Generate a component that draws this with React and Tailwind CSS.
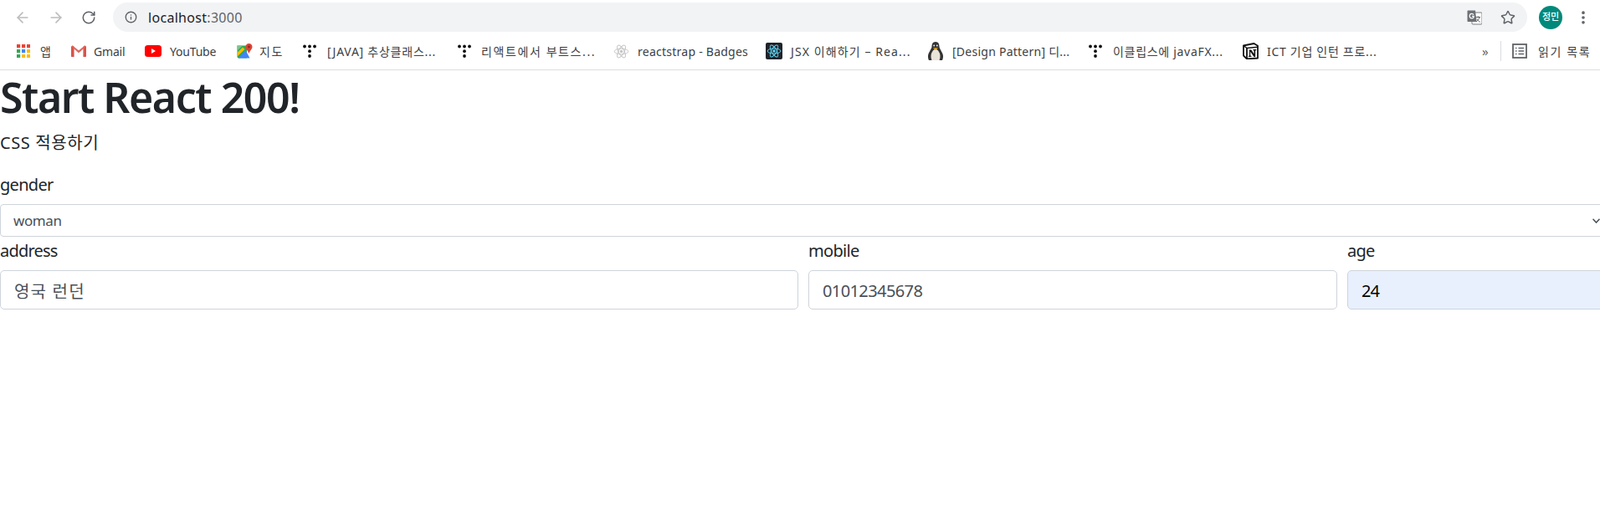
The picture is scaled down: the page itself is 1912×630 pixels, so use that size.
import React from "react";
import { ArrowLeft, ArrowRight, RotateCw, Star, MoreVertical, Info } from "lucide-react";

const ui = "font-['Noto_Sans','Noto_Sans_CJK_KR',sans-serif]";

function Apps() {
  const c = ["#ea4335", "#ea4335", "#ea4335", "#34a853", "#4285f4", "#fbbc05", "#34a853", "#fbbc05", "#fbbc05"];
  return (
    <svg width="16" height="16" viewBox="0 0 16 16">
      {c.map((f, i) => (
        <rect key={i} x={(i % 3) * 6} y={Math.floor(i / 3) * 6} width="4.2" height="4.2" fill={f} />
      ))}
    </svg>
  );
}
function Gmail() {
  return (
    <svg width="18" height="14" viewBox="0 0 18 14">
      <path d="M0.5 1.5V14H3.5V5L9 9.2L14.5 5V14H17.5V1.5L16 0.5L9 6L2 0.5Z" fill="#d9d9d9" />
      <path d="M0 1.8L1.6 0.4L3.5 1.8V14H1C0.4 14 0 13.6 0 13Z" fill="#d9534a" />
      <path d="M18 1.8L16.4 0.4L14.5 1.8V14H17C17.6 14 18 13.6 18 13Z" fill="#d9534a" />
      <path d="M1.6 0.4L9 6.4L16.4 0.4L17.6 1.6L9 9.2L0.6 1.6Z" fill="#e4645a" />
    </svg>
  );
}
function YouTube() {
  return (
    <svg width="20" height="14" viewBox="0 0 20 14">
      <rect width="20" height="14" rx="3.5" fill="#f00" />
      <path d="M8 4L13 7L8 10Z" fill="#fff" />
    </svg>
  );
}
function Maps() {
  return (
    <svg width="19" height="18" viewBox="0 0 19 18">
      <path d="M0.5 2.5L12 2.5V17.5H2L0.5 16.500Z" fill="#34a853" />
      <path d="M1.500 17.500L10.500 8L15.500 17.500Z" fill="#4285f4" />
      <path d="M0.500 11L7 4.500L9.500 7L0.500 15.500Z" fill="#fbbc05" />
      <path d="M0.500 2.500H7L0.500 8.500Z" fill="#7cc48f" />
      <path d="M14.500 0C12 0 10.500 1.900 10.500 3.900C10.500 6.600 13.500 8.600 14.500 12C15.500 8.600 18.500 6.600 18.500 3.900C18.500 1.900 17 0 14.500 0Z" fill="#db4437" />
      <circle cx="14.500" cy="4" r="1.400" fill="#8c2a22" />
    </svg>
  );
}
function Dots() {
  return (
    <svg width="16" height="16" viewBox="0 0 16 16">
      {[[2, 2.5], [8, 2.5], [14, 2.5], [8, 8.2], [8, 14]].map(([x, y], i) => (
        <circle key={i} cx={x} cy={y} r="1.9" fill="#111" />
      ))}
    </svg>
  );
}
function ReactGlyph({ size, color }) {
  return (
    <svg width={size} height={size} viewBox="0 0 24 24" fill="none" stroke={color} strokeWidth="1.2">
      <ellipse cx="12" cy="12" rx="10.5" ry="4.2" />
      <ellipse cx="12" cy="12" rx="10.5" ry="4.2" transform="rotate(60 12 12)" />
      <ellipse cx="12" cy="12" rx="10.5" ry="4.2" transform="rotate(120 12 12)" />
      <circle cx="12" cy="12" r="2.2" fill={color} stroke="none" />
    </svg>
  );
}
function Penguin() {
  return (
    <svg width="20" height="22" viewBox="0 0 20 22">
      <path d="M10 0C6.500 0 5.500 2.800 5.500 5.800C5.500 8 2.200 12 1.200 15.500C0.700 17.500 1 20 2 22H18C19 20 19.300 17.500 18.800 15.500C17.800 12 14.500 8 14.500 5.800C14.500 2.800 13.500 0 10 0Z" fill="#333" />
      <path d="M10 8.500C7.500 9 4.500 13 4.500 17C4.500 19 5 21 5.500 22H14.500C15 21 15.500 19 15.500 17C15.500 13 12.500 9 10 8.500Z" fill="#e9e4d8" />
      <path d="M7 7.200H13L10 10Z" fill="#e8a61c" />
      <circle cx="8.200" cy="4.500" r="1" fill="#eee" />
      <circle cx="11.800" cy="4.500" r="1" fill="#eee" />
    </svg>
  );
}
function Notion() {
  return (
    <svg width="19" height="20" viewBox="0 0 19 20">
      <path d="M1 3.500L13.500 1L18 3.800V18.500L5 19.500L1 15.500Z" fill="#fff" stroke="#111" strokeWidth="1.800" strokeLinejoin="round" />
      <path d="M1 3.500L5 6.500L18 5.300" fill="none" stroke="#111" strokeWidth="1.500" />
      <path d="M5 6.500V19" stroke="#111" strokeWidth="1.800" />
      <path d="M7.500 8.500H10.300L13.500 13.500V9.500L12.500 9V8H16.200V9L15.200 9.500V17H13.500L9.200 10.700V15.500L10.500 16V17H7V16L8 15.500V9.500L7.500 9Z" fill="#111" />
    </svg>
  );
}
function Translate() {
  return (
    <svg width="18" height="18" viewBox="0 0 18 18">
      <rect x="6" y="3" width="12" height="14" rx="1" fill="#fff" stroke="#7a7d80" strokeWidth="1" />
      <path d="M1.500 0.500H10L11.500 14H1.500C0.900 14 0.500 13.600 0.500 13V1.500C0.500 0.900 0.900 0.500 1.500 0.500Z" fill="#6d7074" />
      <path d="M8 5.600C7.500 4.700 6.700 4.300 5.800 4.300C4.300 4.300 3.200 5.500 3.200 7.100C3.200 8.700 4.300 9.900 5.800 9.900C7.300 9.900 8.200 8.900 8.200 7.300H5.900" fill="none" stroke="#fff" strokeWidth="1.200" />
      <path d="M10.500 8.500H16M13.300 7.300V8.500M15 8.500C14.500 11 12.800 13 11 14M11.800 10.500C12.500 12 14 13.500 15.800 14.300" fill="none" stroke="#5f6368" strokeWidth="1" />
    </svg>
  );
}
function ReadingList() {
  return (
    <svg width="18" height="18" viewBox="0 0 18 18" fill="none">
      <rect x="1" y="1" width="16" height="16" stroke="#5f6368" strokeWidth="1.800" />
      <path d="M4 5.500H5.500M7.500 5.500H14M4 9H5.500M7.500 9H14M4 12.500H5.500M7.500 12.500H14" stroke="#5f6368" strokeWidth="1.500" />
    </svg>
  );
}

function Bookmark({ width, icon, gap = "gap-[10px]", align = "justify-center", track = "tracking-[-0.2px]", children }) {
  return (
    <div className={`flex items-center shrink-0 ${gap} ${width}`}>
      <span className={`flex w-[20px] shrink-0 ${align}`}>{icon}</span>
      <span className={`whitespace-nowrap text-[14px] text-[#3c4043] ${track}`}>{children}</span>
    </div>
  );
}

const inputBase =
  "block w-full h-[47px] rounded-[5px] border border-[#ced4da] px-[16px] pt-[2px] text-[20px] outline-none";

export default function App() {
  return (
    <div className={`${ui} w-[1912px] h-[630px] overflow-hidden bg-white`}>
      <header className="h-[84px] border-b border-[#dadce0]">
        <div className="h-[41px] flex items-start pt-[3px]">
          <div className="flex items-center h-[35px] w-[135px] shrink-0 pl-[17px] gap-[20px]">
            <ArrowLeft size={20} strokeWidth={2} className="text-[#babcbe]" />
            <ArrowRight size={20} strokeWidth={2} className="text-[#babcbe]" />
            <RotateCw size={18} strokeWidth={2} className="text-[#5f6368]" />
          </div>
          <div className="flex items-center h-[35px] w-[1690px] rounded-full bg-[#f1f3f4] pl-[14px] pr-[14px]">
            <Info size={15} strokeWidth={2.2} className="text-[#5f6368]" />
            <span className="ml-[13px] text-[16px] tracking-[0.3px] text-[#202124]">
              localhost<span className="text-[#5f6368]">:3000</span>
            </span>
            <div className="ml-auto flex items-center gap-[22px]">
              <Translate />
              <Star size={18} strokeWidth={2} className="text-[#5f6368]" />
            </div>
          </div>
          <div className="flex items-center h-[35px] ml-[14px] gap-[19px]">
            <div className="flex h-[28px] w-[28px] items-center justify-center rounded-full bg-[#00897b] text-[11px] font-medium text-white">
              정민
            </div>
            <MoreVertical size={20} strokeWidth={2.4} className="-ml-[4px] text-[#5f6368]" />
          </div>
        </div>
        <div className="h-[40px] flex items-center pl-[18px]">
          <Bookmark width="w-[66px]" track="tracking-[0px]" icon={<Apps />}>앱</Bookmark>
          <Bookmark width="w-[89px]" gap="gap-[8px]" icon={<Gmail />}>Gmail</Bookmark>
          <Bookmark width="w-[109px]" icon={<YouTube />}>YouTube</Bookmark>
          <Bookmark width="w-[80px]" gap="gap-[8px]" track="tracking-[1.5px]" icon={<Maps />}>지도</Bookmark>
          <Bookmark width="w-[185px]" gap="gap-[9px]" align="justify-start" track="tracking-[0.75px]" icon={<Dots />}>[JAVA] 추상클래스...</Bookmark>
          <Bookmark width="w-[185px]" gap="gap-[8px]" align="justify-start" track="tracking-[1.6px]" icon={<Dots />}>리액트에서 부트스...</Bookmark>
          <Bookmark width="w-[183px]" track="tracking-[0.25px]" icon={<ReactGlyph size={19} color="#c4c4c4" />}>reactstrap - Badges</Bookmark>
          <Bookmark
            width="w-[193px]"
            track="tracking-[1.1px]"
            icon={
              <span className="flex h-[20px] w-[20px] items-center justify-center rounded-[2px] bg-[#20232a]">
                <ReactGlyph size={18} color="#61dafb" />
              </span>
            }
          >
            JSX 이해하기 – Rea...
          </Bookmark>
          <Bookmark width="w-[193px]" track="tracking-[0.25px]" icon={<Penguin />}>[Design Pattern] 디...</Bookmark>
          <Bookmark width="w-[183px]" gap="gap-[9px]" align="justify-start" track="tracking-[0.7px]" icon={<Dots />}>이클립스에 javaFX...</Bookmark>
          <Bookmark width="w-[287px]" track="tracking-[0.7px]" icon={<Notion />}>ICT 기업 인턴 프로...</Bookmark>
          <span className="w-[22px] shrink-0 text-[15px] leading-none text-[#5f6368]">»</span>
          <span className="h-[24px] w-px shrink-0 bg-[#dadce0]" />
          <div className="ml-[13px] flex items-center gap-[13px] shrink-0">
            <ReadingList />
            <span className="whitespace-nowrap text-[14px] tracking-[1.6px] text-[#3c4043]">읽기 목록</span>
          </div>
        </div>
      </header>

      <main className="w-[1925px] text-[#212529] text-[20px] leading-[30px]">
        <h1 className="mt-[2px] h-[60px] mb-[10px] text-[50px] leading-[60px] font-semibold tracking-[-1.45px] whitespace-nowrap">
          Start React 200!
        </h1>
        <p className="mb-[20px] tracking-[0.6px]">CSS 적용하기</p>
        <label className="block mb-[8px] tracking-[-0.7px]">gender</label>
        <div className="relative">
          <select
            defaultValue="woman"
            className="block w-full h-[39px] appearance-none rounded-[4px] border border-[#ced4da] bg-white pl-[15px] pt-[1px] text-[17px] tracking-[-0.4px] text-[#495057] outline-none"
          >
            <option>woman</option>
            <option>man</option>
          </select>
          <svg
            className="absolute left-[1903px] top-[17px]"
            width="9"
            height="6"
            viewBox="0 0 9 6"
            fill="none"
            stroke="#495057"
            strokeWidth="1.600"
          >
            <path d="M0.500 0.700L4.500 5L8.500 0.700" />
          </svg>
        </div>
        <div className="flex gap-[12px] pt-[2px]">
          <div className="w-[954px] shrink-0">
            <label className="block mb-[8px] tracking-[-0.8px]">address</label>
            <input readOnly value="영국 런던" className={`${inputBase} text-[#495057] tracking-[1.2px]`} />
          </div>
          <div className="w-[632px] shrink-0">
            <label className="block mb-[8px] tracking-[-0.7px]">mobile</label>
            <input readOnly value="01012345678" className={`${inputBase} text-[#495057] tracking-[-0.6px]`} />
          </div>
          <div className="w-[315px] shrink-0">
            <label className="block mb-[8px] tracking-[-0.7px]">age</label>
            <input readOnly value="24" className={`${inputBase} bg-[#e8f0fe] text-black tracking-[-0.9px]`} />
          </div>
        </div>
      </main>
    </div>
  );
}
